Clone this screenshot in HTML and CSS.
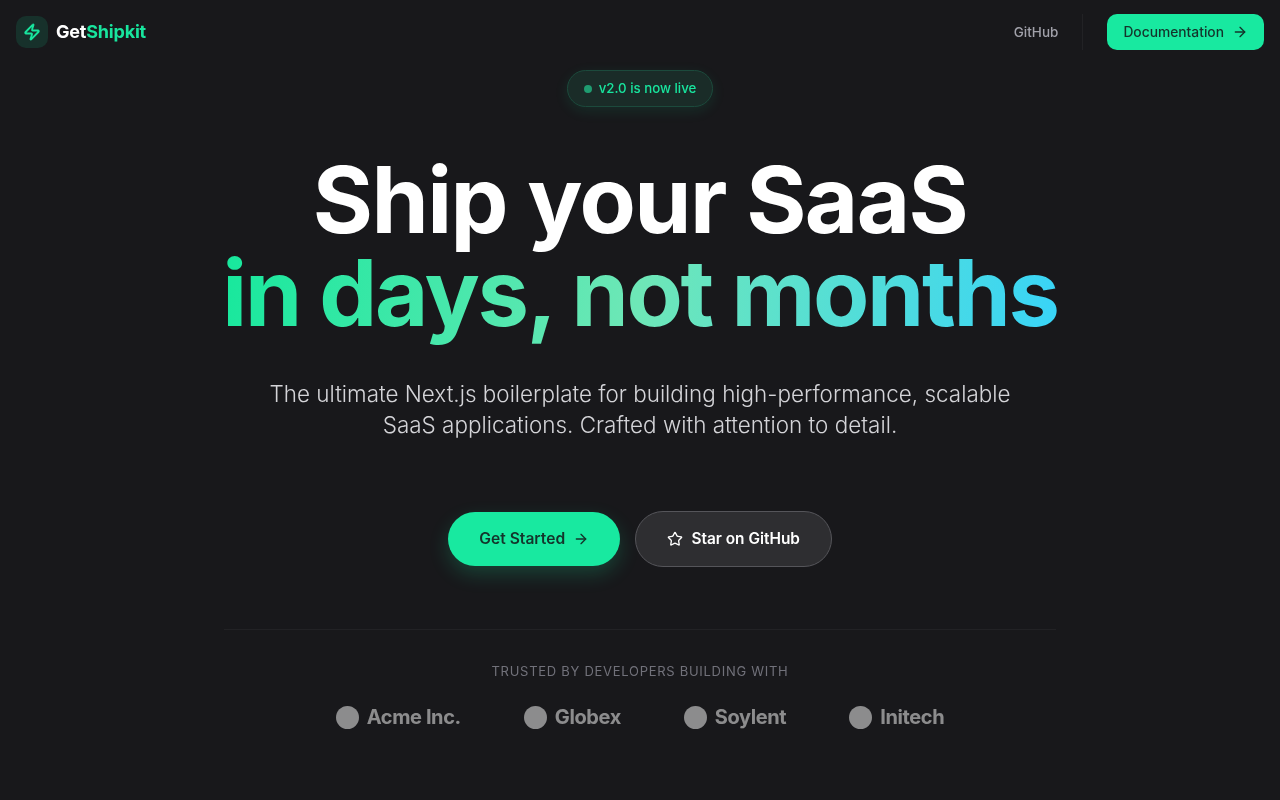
FILE: index.html
```html
<!DOCTYPE html>
<html lang="en">
<head>
  <meta charset="UTF-8">
  <meta name="viewport" content="width=device-width, initial-scale=1.0">
  <title>GetShipkit</title>
  <link rel="stylesheet" href="styles.css">
</head>
<body>

  <header class="navBar">
    <a class="brand" href="#">
      <span class="brandIcon">
        <svg width="18" height="18" viewBox="0 0 24 24" fill="none" stroke="currentColor" stroke-width="2.5" stroke-linecap="round" stroke-linejoin="round"><path d="M4 14a1 1 0 0 1-.78-1.63l9.9-10.2a.5.5 0 0 1 .86.46l-1.92 6.02A1 1 0 0 0 13 10h7a1 1 0 0 1 .78 1.63l-9.9 10.2a.5.5 0 0 1-.86-.46l1.92-6.02A1 1 0 0 0 11 14z"/></svg>
      </span>
      <span class="brandName">Get<span class="brandAccent">Shipkit</span></span>
    </a>
    <nav class="navLinks">
      <a class="navLink" href="#">GitHub</a>
      <span class="navDivider"></span>
      <a class="docsBtn" href="#">Documentation
        <svg width="16" height="16" viewBox="0 0 24 24" fill="none" stroke="currentColor" stroke-width="2" stroke-linecap="round" stroke-linejoin="round"><path d="M5 12h14"/><path d="m12 5 7 7-7 7"/></svg>
      </a>
    </nav>
  </header>

  <main class="hero">
    <div class="badge"><span class="badgeDot"></span>v2.0 is now live</div>

    <h1 class="heroTitle">Ship your SaaS<br><span class="heroGradient">in days, not months</span></h1>

    <p class="heroText">The ultimate Next.js boilerplate for building high-performance, scalable SaaS applications. Crafted with attention to detail.</p>

    <div class="heroActions">
      <a class="primaryBtn" href="#">Get Started
        <svg width="16" height="16" viewBox="0 0 24 24" fill="none" stroke="currentColor" stroke-width="2" stroke-linecap="round" stroke-linejoin="round"><path d="M5 12h14"/><path d="m12 5 7 7-7 7"/></svg>
      </a>
      <a class="secondaryBtn" href="#">
        <svg width="16" height="16" viewBox="0 0 24 24" fill="none" stroke="currentColor" stroke-width="2" stroke-linecap="round" stroke-linejoin="round"><path d="M11.525 2.295a.53.53 0 0 1 .95 0l2.31 4.679a2.123 2.123 0 0 0 1.595 1.16l5.166.756a.53.53 0 0 1 .294.904l-3.736 3.638a2.123 2.123 0 0 0-.611 1.878l.882 5.14a.53.53 0 0 1-.771.56l-4.618-2.428a2.122 2.122 0 0 0-1.973 0L6.396 21.01a.53.53 0 0 1-.77-.56l.881-5.139a2.122 2.122 0 0 0-.611-1.879L2.16 9.795a.53.53 0 0 1 .294-.906l5.165-.755a2.122 2.122 0 0 0 1.597-1.16z"/></svg>
        <span class="btnLabel">Star on GitHub</span>
      </a>
    </div>

    <section class="trusted">
      <p class="trustedLabel">TRUSTED BY DEVELOPERS BUILDING WITH</p>
      <div class="trustedLogos">
        <div class="logoItem"><span class="logoDot"></span>Acme Inc.</div>
        <div class="logoItem"><span class="logoDot"></span>Globex</div>
        <div class="logoItem"><span class="logoDot"></span>Soylent</div>
        <div class="logoItem"><span class="logoDot"></span>Initech</div>
      </div>
    </section>
  </main>

</body>
</html>
```

FILE: styles.css
```css
* {
  box-sizing: border-box;
}
body {
  font-family: Inter, "Liberation Sans", sans-serif;
  margin: 0;
  height: 800px;
  overflow: hidden;
  background-color: #18181b;
  color: #fff;
}
a {
  text-decoration: none;
  color: inherit;
}
.navBar {
  display: flex;
  justify-content: space-between;
  align-items: center;
  height: 64px;
  padding: 0 16px;
  will-change: transform;
}
.brand {
  display: flex;
  align-items: center;
  gap: 8px;
}
.brandIcon {
  display: flex;
  align-items: center;
  justify-content: center;
  width: 32px;
  height: 32px;
  border-radius: 10px;
  background-color: #17312b;
  color: #18e59e;
}
.brandName {
  font-size: 18px;
  font-weight: 700;
  line-height: 26px;
  letter-spacing: -0.2px;
  margin-bottom: 1px;
}
.brandAccent {
  color: #18e59e;
}
.navLinks {
  display: flex;
  align-items: center;
  gap: 24px;
}
.navLink {
  font-size: 13.5px;
  font-weight: 500;
  color: #a1a1aa;
}
.navDivider {
  width: 1px;
  height: 36px;
  background-color: #222225;
}
.docsBtn {
  display: flex;
  align-items: center;
  gap: 8px;
  height: 36px;
  padding: 0 16px;
  border-radius: 10px;
  background-color: #18e9a0;
  color: #14342b;
  font-size: 13.8px;
  font-weight: 500;
}
.hero {
  display: flex;
  flex-direction: column;
  align-items: center;
  padding-top: 6px;
  will-change: transform;
}
.badge {
  display: flex;
  align-items: center;
  gap: 7px;
  height: 37px;
  padding: 0 16px;
  border: 1px solid #1c4a3c;
  border-radius: 999px;
  background-color: #1a2c28;
  box-shadow: 0 4px 14px rgba(24, 233, 160, 0.1);
  color: #18e59e;
  font-size: 13.25px;
  font-weight: 500;
  line-height: 35px;
}
.badgeDot {
  width: 8px;
  height: 8px;
  border-radius: 50%;
  background-color: #1f9c70;
}
.heroTitle {
  margin: 46px 0 0;
  font-size: 92px;
  font-weight: 700;
  line-height: 93px;
  letter-spacing: -1.55px;
  text-align: center;
}
.heroGradient {
  background: linear-gradient(100deg, #16e89c 0%, #6ee7b7 50%, #38d4f8 100%);
  -webkit-background-clip: text;
  background-clip: text;
  color: transparent;
  letter-spacing: -2.35px;
}
.heroText {
  width: 768px;
  margin: 39px 0 0;
  font-size: 22.45px;
  font-weight: 300;
  line-height: 31px;
  text-align: center;
  color: #d4d4d8;
}
.heroActions {
  display: flex;
  align-items: center;
  gap: 15px;
  margin-top: 71px;
}
.primaryBtn {
  display: flex;
  align-items: center;
  gap: 8px;
  height: 54px;
  padding: 0 31.25px 1px;
  border-radius: 999px;
  background-color: #18e9a0;
  box-shadow: 0 8px 20px rgba(24, 233, 160, 0.2);
  color: #14342b;
  font-size: 15.6px;
  font-weight: 600;
}
.secondaryBtn {
  display: flex;
  align-items: center;
  gap: 8px;
  height: 56px;
  padding: 0 31px;
  border: 1px solid #55555a;
  border-radius: 999px;
  background-color: #2e2e31;
  font-size: 15.4px;
  font-weight: 600;
}
.btnLabel {
  margin-bottom: 1px;
}
.trusted {
  width: 832px;
  margin-top: 62px;
  padding-top: 32px;
  border-top: 1px solid #222225;
  text-align: center;
}
.trustedLabel {
  margin: 0;
  font-size: 13px;
  line-height: 18px;
  letter-spacing: 0.72px;
  color: #71717a;
}
.trustedLogos {
  display: flex;
  justify-content: center;
  gap: 63px;
  margin-top: 25px;
  opacity: 0.5;
}
.logoItem {
  display: flex;
  align-items: center;
  gap: 8px;
  font-size: 20px;
  font-weight: 700;
  letter-spacing: -0.4px;
  color: #fff;
}
.logoDot {
  width: 23px;
  height: 23px;
  border-radius: 50%;
  background-color: #fff;
}
```
